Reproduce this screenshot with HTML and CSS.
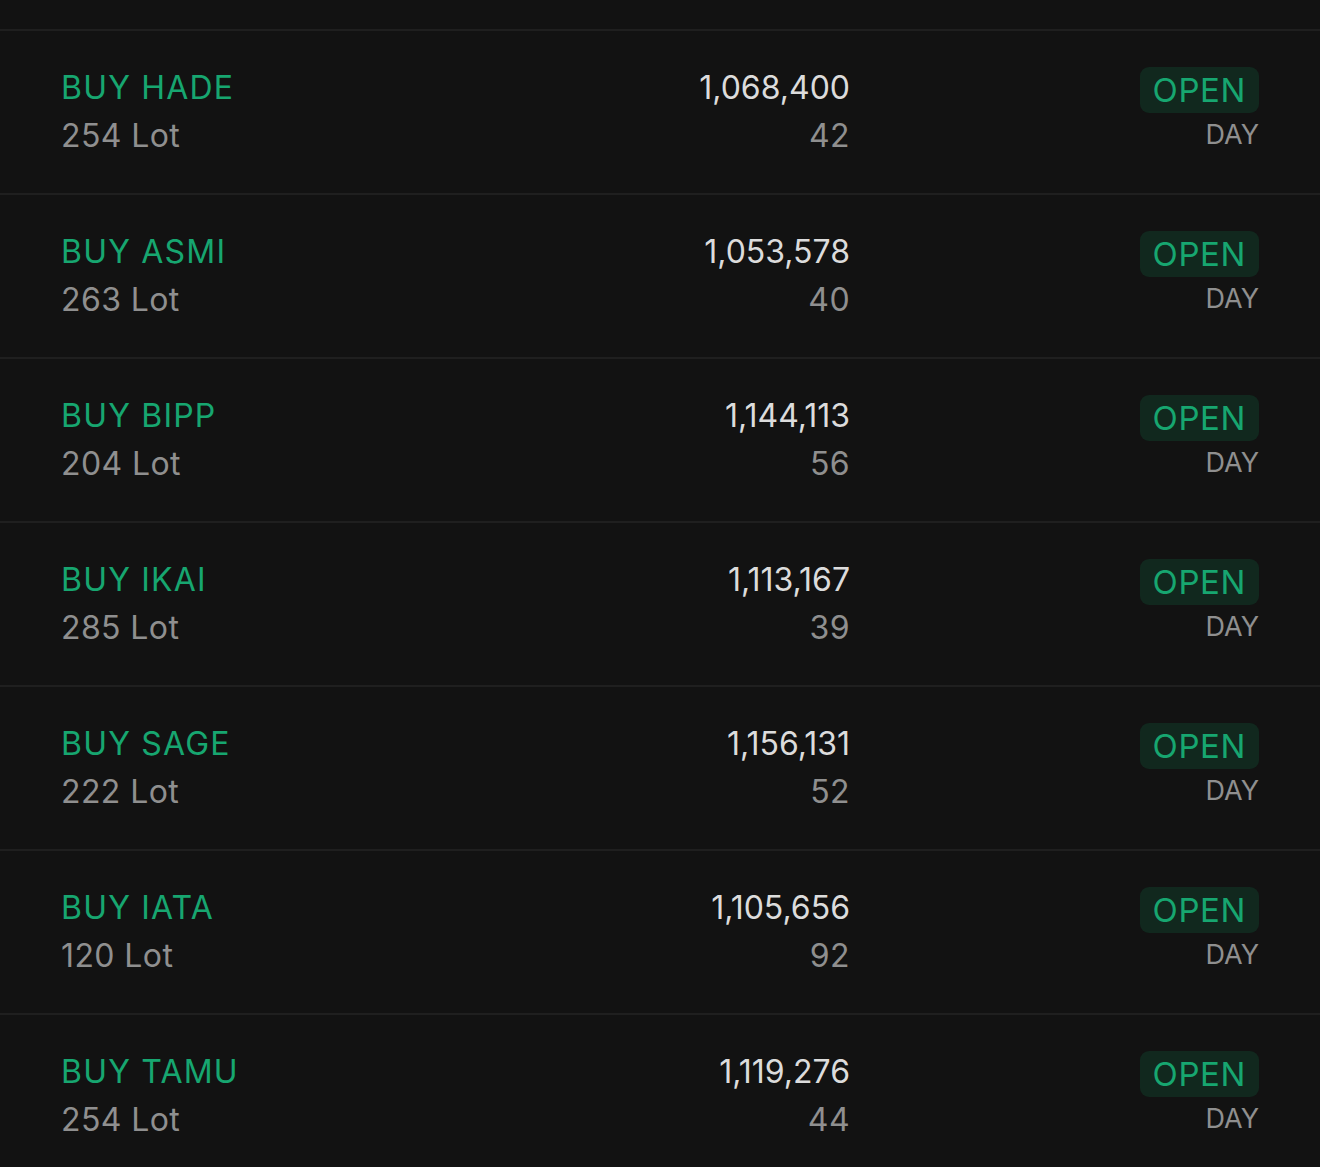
FILE: index.html
```html
<!DOCTYPE html>
<html lang="en">
<head>
<meta charset="UTF-8" />
<meta name="viewport" content="width=device-width, initial-scale=1" />
<title>Orders</title>
<link rel="stylesheet" href="styles.css">
</head>
<body>
<div class="orders">
  <div class="order">
    <div class="col-name"><div class="side">BUY HADE</div><div class="sub">254 Lot</div></div>
    <div class="col-price"><div class="price">1,068,400</div><div class="sub">42</div></div>
    <div class="col-status"><span class="badge">OPEN</span><div class="tif">DAY</div></div>
  </div>
  <div class="order">
    <div class="col-name"><div class="side">BUY ASMI</div><div class="sub">263 Lot</div></div>
    <div class="col-price"><div class="price">1,053,578</div><div class="sub">40</div></div>
    <div class="col-status"><span class="badge">OPEN</span><div class="tif">DAY</div></div>
  </div>
  <div class="order">
    <div class="col-name"><div class="side">BUY BIPP</div><div class="sub">204 Lot</div></div>
    <div class="col-price"><div class="price">1,144,113</div><div class="sub">56</div></div>
    <div class="col-status"><span class="badge">OPEN</span><div class="tif">DAY</div></div>
  </div>
  <div class="order">
    <div class="col-name"><div class="side">BUY IKAI</div><div class="sub">285 Lot</div></div>
    <div class="col-price"><div class="price">1,113,167</div><div class="sub">39</div></div>
    <div class="col-status"><span class="badge">OPEN</span><div class="tif">DAY</div></div>
  </div>
  <div class="order">
    <div class="col-name"><div class="side">BUY SAGE</div><div class="sub">222 Lot</div></div>
    <div class="col-price"><div class="price">1,156,131</div><div class="sub">52</div></div>
    <div class="col-status"><span class="badge">OPEN</span><div class="tif">DAY</div></div>
  </div>
  <div class="order">
    <div class="col-name"><div class="side">BUY IATA</div><div class="sub">120 Lot</div></div>
    <div class="col-price"><div class="price">1,105,656</div><div class="sub">92</div></div>
    <div class="col-status"><span class="badge">OPEN</span><div class="tif">DAY</div></div>
  </div>
  <div class="order">
    <div class="col-name"><div class="side">BUY TAMU</div><div class="sub">254 Lot</div></div>
    <div class="col-price"><div class="price">1,119,276</div><div class="sub">44</div></div>
    <div class="col-status"><span class="badge">OPEN</span><div class="tif">DAY</div></div>
  </div>
</div>
</body>
</html>
```

FILE: styles.css
```css
* { box-sizing: border-box; }
html, body {
  margin: 0; padding: 0;
  height: 100%;
  background: #121212;
  font-family: 'Inter', 'Lato', sans-serif;
  font-variant-numeric: proportional-nums;
  overflow: hidden;
}
.orders { padding-top: 29px; }
.order {
  display: grid;
  grid-template-columns: 1fr 300px 409px;
  height: 164px;
  padding: 33px 61px 0;
  border-top: 2px solid #1f1f1f;
}
/* Left column */
.side {
  font-size: 32px;
  line-height: 48px;
  letter-spacing: 1.2px;
  color: #17a670;
}
.sub {
  font-size: 32px;
  line-height: 48px;
  letter-spacing: 0.4px;
  color: #8f8f8f;
}
/* Price column */
.col-price { text-align: right; }
.price {
  font-size: 32px;
  line-height: 48px;
  color: #dcdcdc;
}
/* Status column */
.col-status {
  display: flex;
  flex-direction: column;
  align-items: flex-end;
  padding-top: 3px;
}
.badge {
  display: block;
  height: 46px;
  padding: 0 13px;
  border-radius: 9px;
  background: #11281e;
  color: #17a670;
  font-size: 33px;
  line-height: 46px;
  letter-spacing: 0.6px;
}
.tif {
  margin-top: 5px;
  font-size: 27px;
  line-height: 34px;
  color: #8f8f8f;
}
```
